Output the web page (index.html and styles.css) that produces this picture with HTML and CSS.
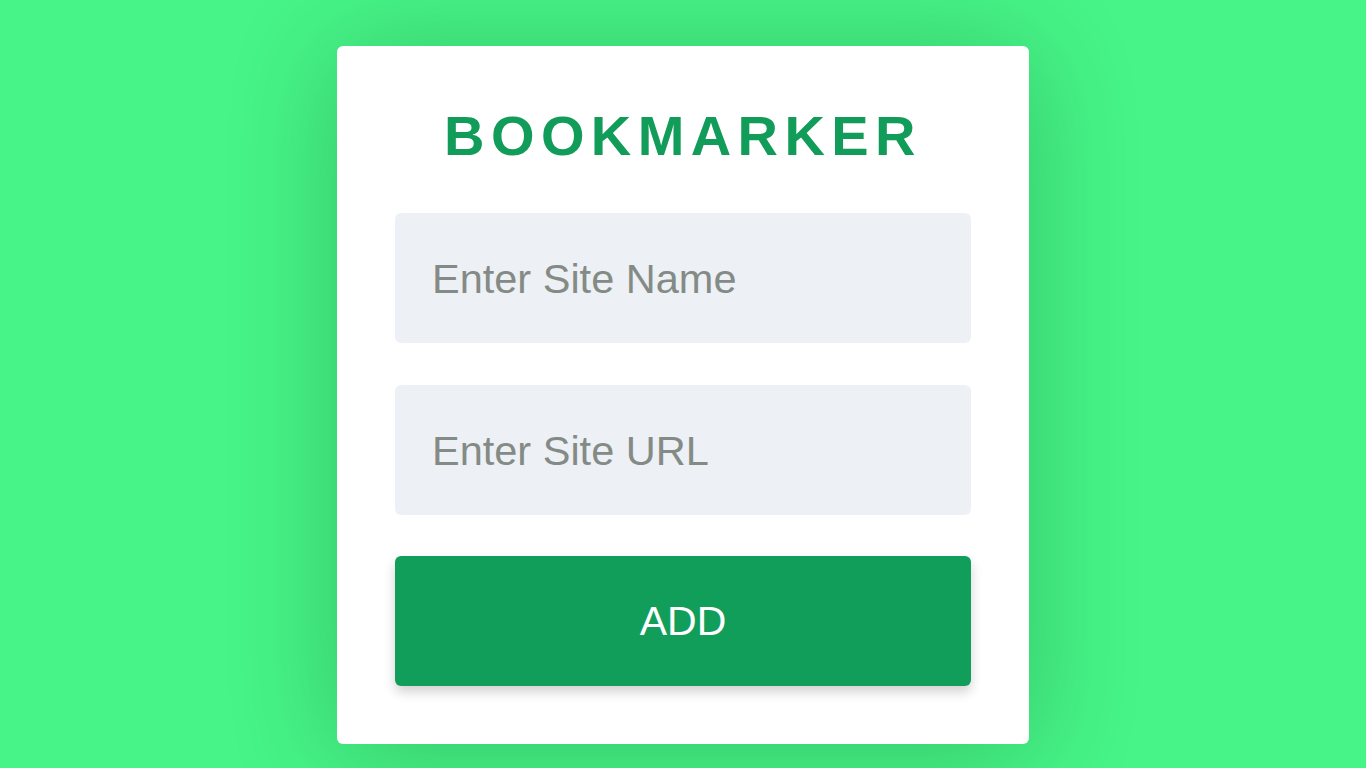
FILE: index.html
```html
<!DOCTYPE html>
<html lang="en">
<head>
<meta charset="utf-8">
<title>Bookmarker</title>
<link rel="stylesheet" href="styles.css">
</head>
<body>
  <main class="page">
    <section class="card">
      <h1 class="title">BOOKMARKER</h1>
      <form class="form">
        <input class="field" type="text" placeholder="Enter Site Name">
        <input class="field" type="text" placeholder="Enter Site URL">
        <button class="add-btn" type="button">ADD</button>
      </form>
    </section>
  </main>
</body>
</html>
```
FILE: styles.css
```css
* { box-sizing: border-box; }
html, body { margin: 0; padding: 0; }
body {
  background: #46f487;
  font-family: "Liberation Sans", Arial, sans-serif;
  min-height: 768px;
  overflow: hidden;
}
.page {
  display: flex;
  justify-content: center;
  padding-top: 46px;
}
.card {
  width: 692px;
  height: 698px;
  background: #fff;
  border-radius: 6px;
  padding: 58px;
  box-shadow: 0 8px 110px rgba(0, 40, 10, 0.24);
}
.title {
  margin: 0 0 45px;
  text-align: center;
  color: #129c5a;
  font-size: 56px;
  font-weight: 700;
  letter-spacing: 6.4px;
  line-height: 64px;
}
.form {
  display: flex;
  flex-direction: column;
  gap: 42px;
}
.field {
  display: block;
  width: 100%;
  height: 130px;
  border: 0;
  border-radius: 6px;
  background: #edf0f4;
  padding: 2px 37px 0;
  font-family: "Liberation Sans", Arial, sans-serif;
  font-size: 41.5px;
  color: #333;
  outline: none;
}
.field::placeholder { color: #848b86; opacity: 1; }
.add-btn {
  height: 130px;
  margin-top: -1px;
  border: 0;
  border-radius: 6px;
  background: #119e5a;
  color: #fff;
  font-family: "Liberation Sans", Arial, sans-serif;
  font-size: 41px;
  box-shadow: 0 6px 12px rgba(0, 0, 0, 0.18);
  cursor: pointer;
}
```
